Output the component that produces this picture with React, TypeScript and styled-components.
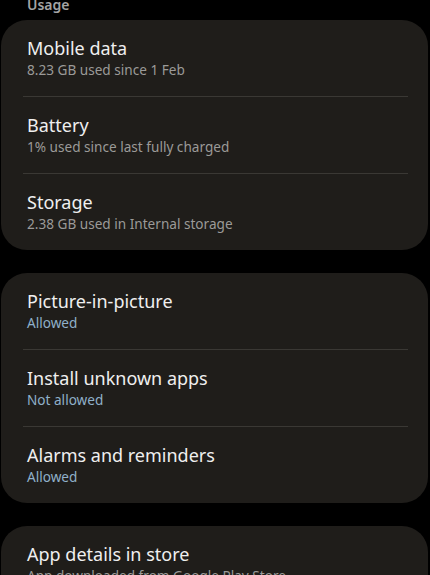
import React from "react";
import styled, { createGlobalStyle } from "styled-components";

const Global = createGlobalStyle`
  html, body { margin: 0; padding: 0; background: #000; }
  body { font-family: "Noto Sans", "Open Sans", sans-serif; overflow: hidden; }
`;

const Page = styled.div`
  width: 430px;
  height: 575px;
  background: #000;
  overflow: hidden;
  display: flex;
  flex-direction: column;
  gap: 23px;
`;

const Header = styled.div`
  margin: -5px 0 -18px 27px;
  height: 20px;
  font-size: 14px;
  line-height: 20px;
  font-weight: 600;
  color: #a4a4a4;
`;

const Card = styled.div`
  margin: 0 2px 0 1px;
  background: #1f1d1a;
  border-radius: 26px;
  display: flex;
  flex-direction: column;
  flex-shrink: 0;
`;

const Row = styled.div`
  padding: 16px 26px;
  display: flex;
  flex-direction: column;
`;

const Title = styled.div`
  font-size: 18px;
  line-height: 24px;
  color: #efefef;
`;

const Sub = styled.div<{ $accent?: boolean }>`
  font-size: 13.6px;
  line-height: 20px;
  color: ${(p) => (p.$accent ? "#8fb0c9" : "#9b9a98")};
`;

const Divider = styled.div`
  height: 1px;
  margin: 0 20px 0 22px;
  background: #3a3834;
`;

type Item = { title: string; sub: string; accent?: boolean };

const groups: Item[][] = [
  [
    { title: "Mobile data", sub: "8.23 GB used since 1 Feb" },
    { title: "Battery", sub: "1% used since last fully charged" },
    { title: "Storage", sub: "2.38 GB used in Internal storage" },
  ],
  [
    { title: "Picture-in-picture", sub: "Allowed", accent: true },
    { title: "Install unknown apps", sub: "Not allowed", accent: true },
    { title: "Alarms and reminders", sub: "Allowed", accent: true },
  ],
  [{ title: "App details in store", sub: "App downloaded from Google Play Store" }],
];

export default function App() {
  return (
    <>
      <Global />
      <Page>
        <Header>Usage</Header>
        {groups.map((g, gi) => (
          <Card key={gi}>
            {g.map((it, i) => (
              <React.Fragment key={it.title}>
                {i > 0 && <Divider />}
                <Row>
                  <Title>{it.title}</Title>
                  <Sub $accent={it.accent}>{it.sub}</Sub>
                </Row>
              </React.Fragment>
            ))}
          </Card>
        ))}
      </Page>
    </>
  );
}
